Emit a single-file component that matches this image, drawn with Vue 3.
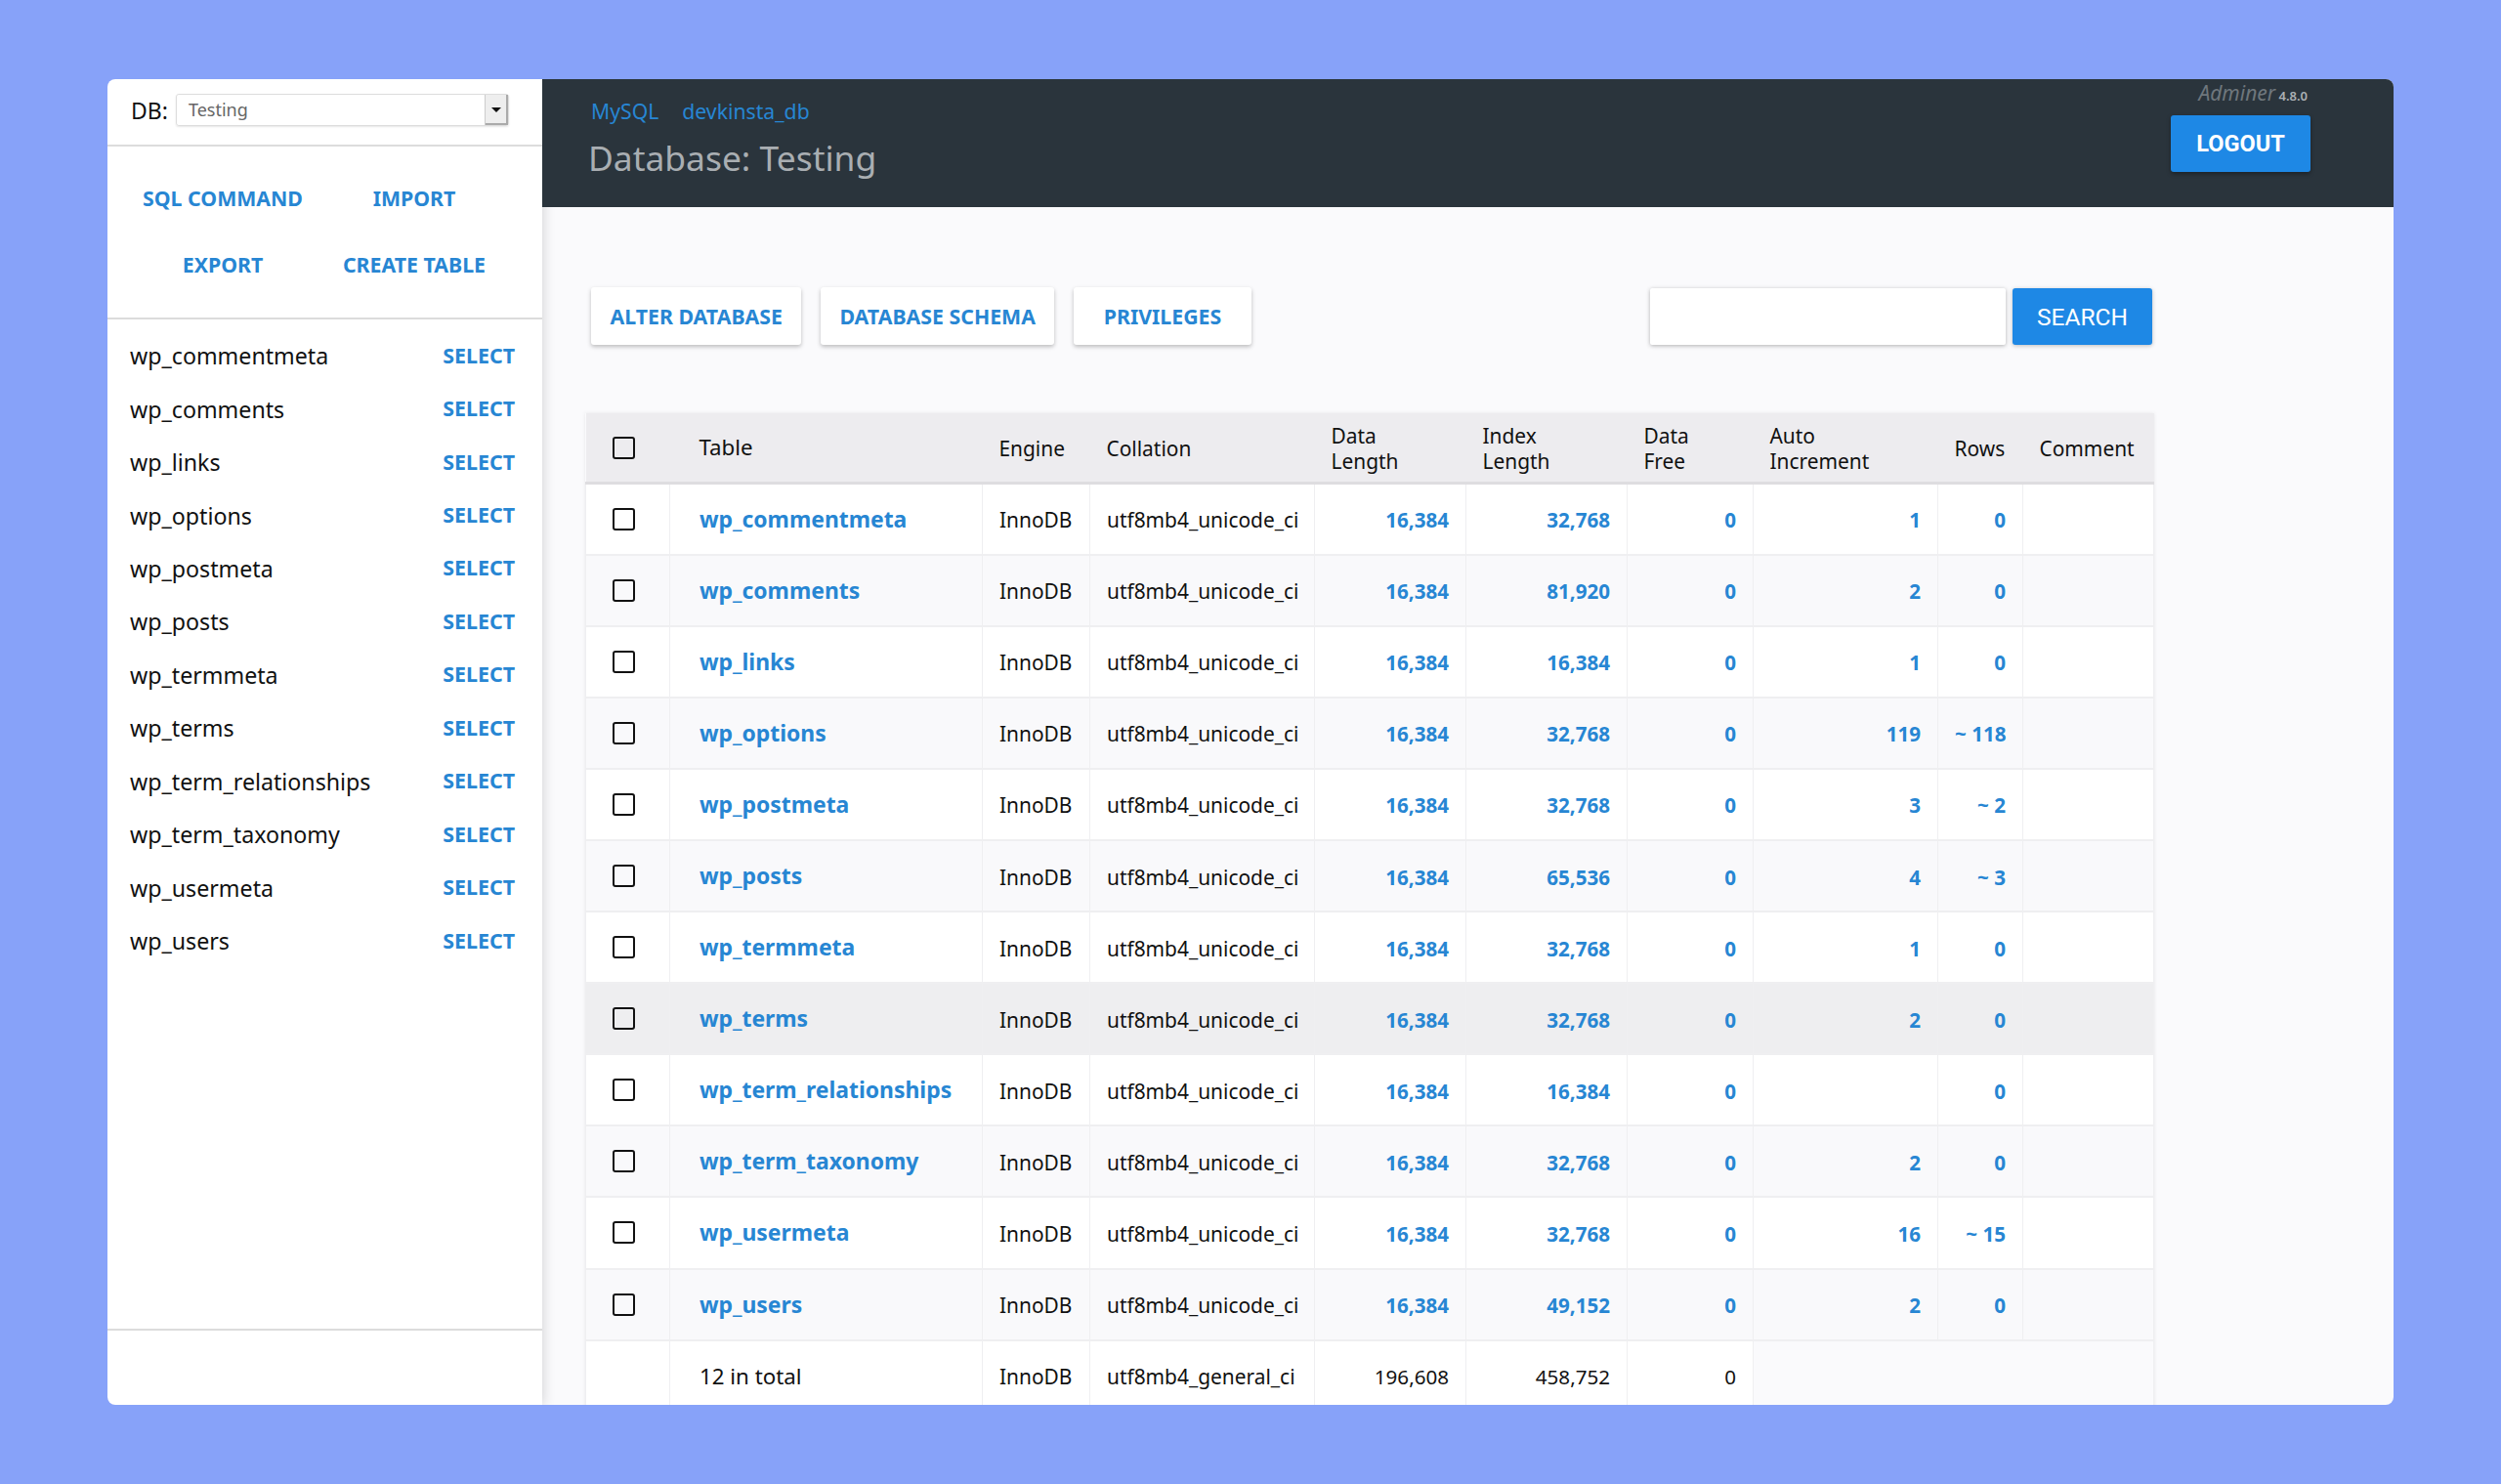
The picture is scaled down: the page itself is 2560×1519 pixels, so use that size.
<template>
  <div class="page">
    <div class="panel">
      <aside class="sidebar">
        <div class="db-row">
          <label class="db-label">DB:</label>
          <div class="db-select">
            <span class="db-value">Testing</span>
            <span class="db-arrow"><i></i></span>
          </div>
        </div>
        <nav class="side-links">
          <a>SQL COMMAND</a>
          <a>IMPORT</a>
          <a>EXPORT</a>
          <a>CREATE TABLE</a>
        </nav>
        <ul class="side-tables">
          <li v-for="t in tables" :key="t.name">
            <span>{{ t.name }}</span>
            <a>SELECT</a>
          </li>
        </ul>
        <div class="side-foot"></div>
      </aside>

      <div class="main">
        <header class="topbar">
          <div>
            <div class="crumbs">
              <a>MySQL</a>
              <a>devkinsta_db</a>
            </div>
            <h1>Database: Testing</h1>
          </div>
          <div class="top-right">
            <div class="version"><em>Adminer</em> <span>4.8.0</span></div>
            <button class="logout">LOGOUT</button>
          </div>
        </header>

        <div class="content">
          <div class="toolbar">
            <a class="tool-btn">ALTER DATABASE</a>
            <a class="tool-btn">DATABASE SCHEMA</a>
            <a class="tool-btn">PRIVILEGES</a>
            <div class="search">
              <input type="text" />
              <button>SEARCH</button>
            </div>
          </div>

          <table class="grid">
            <colgroup>
              <col class="c-check" />
              <col class="c-table" />
              <col class="c-engine" />
              <col class="c-coll" />
              <col class="c-len" />
              <col class="c-index" />
              <col class="c-free" />
              <col class="c-auto" />
              <col class="c-rows" />
              <col class="c-comment" />
            </colgroup>
            <thead>
              <tr>
                <th><span class="check"></span></th>
                <th class="name">Table</th>
                <th>Engine</th>
                <th>Collation</th>
                <th>Data<br />Length</th>
                <th>Index<br />Length</th>
                <th>Data<br />Free</th>
                <th>Auto<br />Increment</th>
                <th>Rows</th>
                <th>Comment</th>
              </tr>
            </thead>
            <tbody>
              <tr
                v-for="t in tables"
                :key="t.name"
                :class="{ hovered: t.name === 'wp_terms' }"
              >
                <td><span class="check"></span></td>
                <td class="name"><a class="strong">{{ t.name }}</a></td>
                <td>InnoDB</td>
                <td>utf8mb4_unicode_ci</td>
                <td class="num"><a>{{ t.data }}</a></td>
                <td class="num"><a>{{ t.index }}</a></td>
                <td class="num"><a>0</a></td>
                <td class="num"><a>{{ t.auto }}</a></td>
                <td class="num"><a>{{ t.rows }}</a></td>
                <td></td>
              </tr>
              <tr class="total">
                <td></td>
                <td class="name">12 in total</td>
                <td>InnoDB</td>
                <td>utf8mb4_general_ci</td>
                <td class="num">196,608</td>
                <td class="num">458,752</td>
                <td class="num">0</td>
                <td class="blank" colspan="3"></td>
              </tr>
            </tbody>
          </table>
        </div>
      </div>
    </div>
  </div>
</template>

<script setup>
const tables = [
  { name: "wp_commentmeta", data: "16,384", index: "32,768", auto: "1", rows: "0" },
  { name: "wp_comments", data: "16,384", index: "81,920", auto: "2", rows: "0" },
  { name: "wp_links", data: "16,384", index: "16,384", auto: "1", rows: "0" },
  { name: "wp_options", data: "16,384", index: "32,768", auto: "119", rows: "~ 118" },
  { name: "wp_postmeta", data: "16,384", index: "32,768", auto: "3", rows: "~ 2" },
  { name: "wp_posts", data: "16,384", index: "65,536", auto: "4", rows: "~ 3" },
  { name: "wp_termmeta", data: "16,384", index: "32,768", auto: "1", rows: "0" },
  { name: "wp_terms", data: "16,384", index: "32,768", auto: "2", rows: "0" },
  { name: "wp_term_relationships", data: "16,384", index: "16,384", auto: "", rows: "0" },
  { name: "wp_term_taxonomy", data: "16,384", index: "32,768", auto: "2", rows: "0" },
  { name: "wp_usermeta", data: "16,384", index: "32,768", auto: "16", rows: "~ 15" },
  { name: "wp_users", data: "16,384", index: "49,152", auto: "2", rows: "0" },
];
</script>

<style>
html,
body {
  margin: 0;
  background: #87a2f9;
}
</style>

<style scoped>
.page {
  box-sizing: border-box;
  height: 1519px;
  padding: 81px 110px;
  font-family: "Noto Sans", "Open Sans", sans-serif;
  color: #111;
  background: #87a2f9;
}

.panel {
  display: flex;
  height: 1357px;
  border-radius: 8px;
  overflow: hidden;
}

a {
  color: #2786d3;
}

/* sidebar */
.sidebar {
  position: relative;
  z-index: 1;
  display: flex;
  flex-direction: column;
  flex: 0 0 445px;
  background: #fff;
  box-shadow: 1px 0 12px rgba(0, 0, 0, 0.16);
}

.db-row {
  display: flex;
  align-items: center;
  gap: 8px;
  box-sizing: border-box;
  height: 69px;
  padding: 0 0 4px 24px;
  border-bottom: 2px solid #dcdcdc;
}

.db-label {
  font-size: 23px;
}

.db-select {
  display: flex;
  width: 341px;
  height: 33px;
  box-sizing: border-box;
  border: 1px solid #ddd;
  border-radius: 3px;
  box-shadow: 0 1px 2px rgba(0, 0, 0, 0.1);
}

.db-value {
  flex: 1;
  padding-left: 12px;
  font-size: 18px;
  line-height: 31px;
  color: #666;
}

.db-arrow {
  display: flex;
  align-items: center;
  justify-content: center;
  width: 23px;
  background: #eee;
  border-left: 1px solid #ccc;
  box-shadow: inset -2px -2px 0 #aaa;
}

.db-arrow i {
  width: 0;
  height: 0;
  border-left: 5px solid transparent;
  border-right: 5px solid transparent;
  border-top: 5px solid #111;
}

.side-links {
  display: grid;
  grid-template-columns: 228px 164px;
  grid-auto-rows: 68px;
  align-content: center;
  justify-items: center;
  align-items: center;
  height: 173px;
  padding: 0 0 2px 4px;
  font-size: 21.3px;
  font-weight: 700;
  border-bottom: 2px solid #dcdcdc;
}

.side-tables {
  flex: 1;
  margin: 0;
  padding: 10px 28px 0 23px;
  list-style: none;
  font-size: 23.2px;
}

.side-tables li {
  display: flex;
  align-items: center;
  justify-content: space-between;
  height: 54.45px;
}

.side-tables a {
  margin-bottom: 2px;
  font-size: 21.4px;
  font-weight: 700;
}

.side-foot {
  height: 76px;
  border-top: 2px solid #dcdcdc;
}

/* main column */
.main {
  flex: 1;
  display: flex;
  flex-direction: column;
  min-width: 0;
  background: #fafafc;
}

.topbar {
  position: relative;
  z-index: 2;
  display: flex;
  justify-content: space-between;
  flex: 0 0 131px;
  box-sizing: border-box;
  padding: 18px 85px 0 47px;
  background: #2a343c;
}

.crumbs {
  display: flex;
  gap: 24px;
  padding-left: 3px;
  font-size: 21.2px;
  line-height: 30px;
}

h1 {
  margin: 7px 0 0;
  font-size: 35.4px;
  font-weight: 400;
  line-height: 50px;
  color: #a9aeb2;
}

.top-right {
  display: flex;
  flex-direction: column;
  align-items: flex-end;
  margin-top: -19px;
}

.version {
  margin-right: 3px;
  font-size: 13px;
  font-weight: 600;
  line-height: 30px;
  color: #aab0b4;
}

.version em {
  font-size: 21px;
  font-weight: 400;
  color: #6f777d;
}

.logout {
  width: 143px;
  height: 58px;
  margin-top: 5px;
  border: 0;
  border-radius: 3px;
  background: #1e88e5;
  color: #fff;
  font-family: Roboto, sans-serif;
  font-size: 23.5px;
  font-weight: 700;
  box-shadow: 0 2px 4px rgba(0, 0, 0, 0.35);
}

.content {
  flex: 1;
  padding: 82px 0 0 44px;
  overflow: hidden;
}

.toolbar {
  display: flex;
  gap: 19.5px;
  width: 1598px;
  height: 59px;
  margin: 0 0 70px 6px;
}

.tool-btn {
  display: flex;
  align-items: center;
  justify-content: center;
  box-sizing: border-box;
  min-width: 182px;
  padding: 0 19.5px;
  border-radius: 3px;
  background: #fff;
  font-size: 21.3px;
  font-weight: 700;
  box-shadow: 0 2px 4px rgba(0, 0, 0, 0.25);
}

.search {
  display: flex;
  gap: 7px;
  margin-left: auto;
  padding-top: 1px;
}

.search input {
  box-sizing: border-box;
  width: 364px;
  height: 58px;
  border: 0;
  border-radius: 2px;
  background: #fff;
  box-shadow: 0 1px 4px rgba(0, 0, 0, 0.3);
}

.search button {
  width: 143px;
  height: 58px;
  border: 0;
  border-radius: 3px;
  background: #1e88e5;
  color: #fff;
  font-family: Roboto, sans-serif;
  font-size: 24.5px;
  font-weight: 400;
  box-shadow: 0 1px 4px rgba(0, 0, 0, 0.25);
}

/* table */
.grid {
  width: 1605px;
  table-layout: fixed;
  border-collapse: collapse;
  font-size: 20.9px;
  box-shadow: 0 0 4px rgba(0, 0, 0, 0.08);
}

.c-check { width: 86px; }
.c-table { width: 320px; }
.c-engine { width: 110px; }
.c-coll { width: 230px; }
.c-len { width: 155px; }
.c-index { width: 165px; }
.c-free { width: 129px; }
.c-auto { width: 189px; }
.c-rows { width: 87px; }
.c-comment { width: 134px; }

th {
  height: 68px;
  padding: 2px 0 0 17px;
  background: #edecef;
  border-bottom: 3px solid #dedde0;
  font-weight: 400;
  line-height: 26px;
  text-align: left;
}

td {
  height: 73.1px;
  padding: 2px 17px 0;
  background: #fff;
  border: 1px solid #efeff1;
  border-width: 0 1px 2px;
  box-sizing: border-box;
  white-space: nowrap;
}

tbody tr:nth-child(even) td {
  background: #f9f9fb;
}

tbody tr.hovered td {
  background: #eeeef0;
}

tbody tr.total td.blank {
  background: transparent;
}

th:first-child,
td:first-child {
  padding: 0 0 0 27px;
}

th.name,
td.name {
  padding: 0 0 0 30px;
  font-size: 22.3px;
}

td.num {
  text-align: right;
  font-size: 20.6px;
  font-weight: 700;
}

tr.total td.num {
  font-weight: 400;
}

.strong {
  font-size: 22.9px;
  font-weight: 700;
}

.check {
  display: block;
  box-sizing: border-box;
  width: 23px;
  height: 23px;
  border: 2.5px solid #111;
  border-radius: 3px;
}
</style>
